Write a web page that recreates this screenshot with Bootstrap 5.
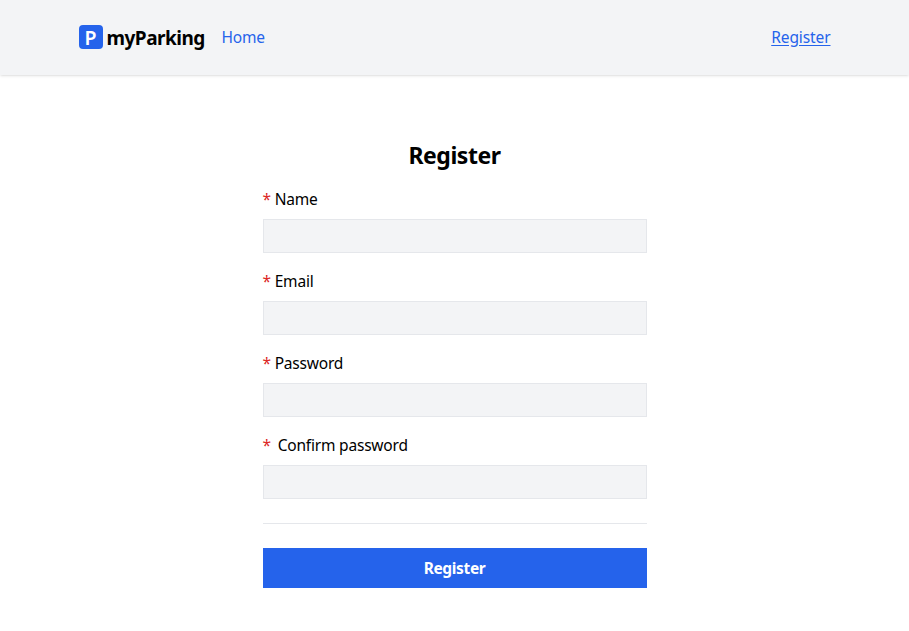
<!DOCTYPE html>
<html lang="en">
<head>
<meta charset="utf-8">
<meta name="viewport" content="width=device-width, initial-scale=1">
<title>myParking</title>
<link href="https://cdn.jsdelivr.net/npm/bootstrap@5.3.0/dist/css/bootstrap.min.css" rel="stylesheet">
<style>
body{font-family:"Noto Sans",sans-serif;font-size:15.5px;line-height:24px;letter-spacing:-.2px;color:#000;background:#fff}
.site-header{background:#f3f4f6;height:75px;box-shadow:0 1px 3px rgba(0,0,0,.1),0 1px 2px -1px rgba(0,0,0,.1)}
.site-inner{width:752px;padding-bottom:1px}
.brand-text{font-size:19px;line-height:28px;letter-spacing:-.5px;padding-top:2px}
.brand-logo{width:24px;height:24px;background:#2563eb;border-radius:4px;color:#fff;font-size:19.5px;font-weight:600;line-height:26px;letter-spacing:0}
.brand{width:127px;margin-right:16px}
.site-link{color:#2563eb}
.nav-end{letter-spacing:-.1px;text-underline-offset:2px}
.register-form{width:384px;margin-top:64px}
.form-title{font-size:23px;line-height:32px;letter-spacing:-.45px}
.field-label{height:24px}
.req{color:#dc2626}
.confirm-text{margin-left:3px}
.field{height:34px;background:#f3f4f6;border:1px solid #e5e7eb}
.rule{border-color:#e5e7eb;opacity:1}
.submit{height:40px;background:#2563eb;border:0;font-size:15.5px;letter-spacing:-.35px;padding:8px 12px 6px}
</style>
</head>
<body>
<header class="site-header">
<nav class="site-inner mx-auto h-100 d-flex align-items-center justify-content-between">
<div class="d-flex align-items-center">
<a href="#" class="brand d-flex align-items-center text-decoration-none text-black fw-bold"><span class="brand-logo flex-shrink-0 text-center me-1">P</span><span class="brand-text">myParking</span></a>
<a href="#" class="site-link text-decoration-none">Home</a>
</div>
<a href="#" class="site-link nav-end">Register</a>
</nav>
</header>
<main class="register-form mx-auto">
<form>
<h1 class="form-title fw-bold text-center mb-3">Register</h1>
<div class="mb-3"><label class="field-label d-block mb-2" for="name"><span class="req">*</span> Name</label><input id="name" class="field form-control rounded-0"></div>
<div class="mb-3"><label class="field-label d-block mb-2" for="email"><span class="req">*</span> Email</label><input id="email" type="email" class="field form-control rounded-0"></div>
<div class="mb-3"><label class="field-label d-block mb-2" for="password"><span class="req">*</span> Password</label><input id="password" type="password" class="field form-control rounded-0"></div>
<div><label class="field-label d-block mb-2" for="confirm"><span class="req">*</span> <span class="confirm-text">Confirm password</span></label><input id="confirm" type="password" class="field form-control rounded-0"></div>
<hr class="rule my-4">
<button type="button" class="submit btn btn-primary w-100 rounded-0 fw-bold">Register</button>
</form>
</main>
<script src="https://cdn.jsdelivr.net/npm/bootstrap@5.3.0/dist/js/bootstrap.bundle.min.js"></script>
</body>
</html>
